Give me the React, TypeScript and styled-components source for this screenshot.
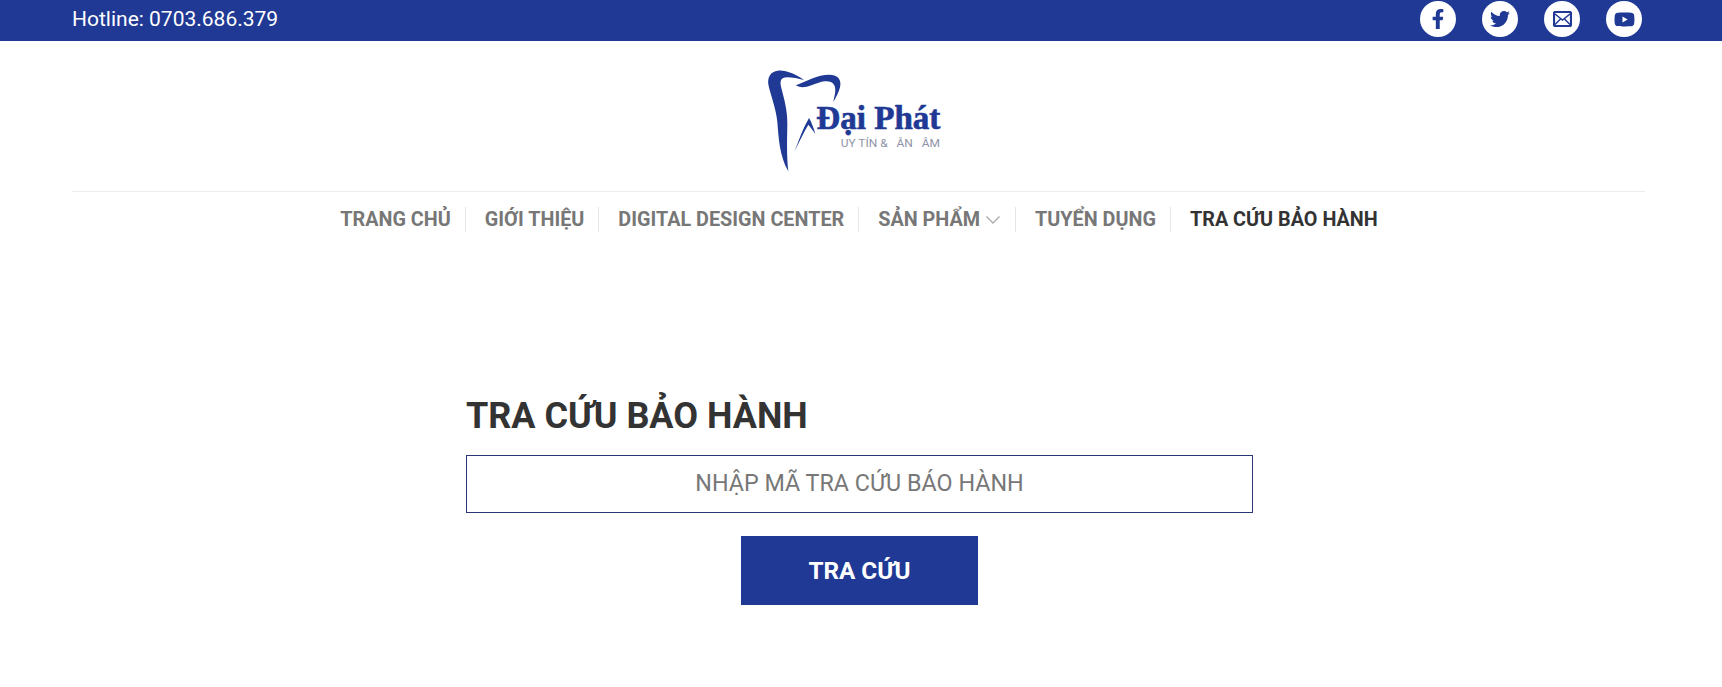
import React from "react";
import styled, { createGlobalStyle } from "styled-components";
import { FaFacebookF, FaTwitter, FaYoutube } from "react-icons/fa";

const BLUE = "#1f3995";

const GlobalStyle = createGlobalStyle`
  html, body {
    margin: 0;
    padding: 0;
    background: #fff;
    font-family: Roboto, "Liberation Sans", sans-serif;
  }
  * {
    box-sizing: border-box;
  }
`;

const TopBar = styled.div`
  height: 41px;
  padding: 1px 80px 0 72px;
  background: ${BLUE};
  display: flex;
  justify-content: space-between;
  align-items: flex-start;
`;

const Hotline = styled.div`
  color: #fff;
  font-size: 21px;
  line-height: 36px;
`;

const Socials = styled.div`
  display: flex;
  gap: 26px;
`;

const SocialLink = styled.a<{ $size?: number }>`
  width: 36px;
  height: 36px;
  border-radius: 50%;
  background: #fff;
  color: ${BLUE};
  font-size: ${(p) => p.$size ?? 20}px;
  display: flex;
  align-items: center;
  justify-content: center;
`;

const LogoRow = styled.div`
  margin: 0 77px 0 72px;
  padding: 9px 0 11px;
  border-bottom: 1px solid #ececec;
  display: flex;
  justify-content: center;
`;

const Nav = styled.nav`
  height: 55px;
  margin: 0 81px 0 72px;
  display: flex;
  justify-content: center;
  align-items: center;
`;

const NavItem = styled.a<{ $active?: boolean }>`
  height: 25px;
  padding: 0 14px 0 19px;
  border-left: 1px solid #e6e6e6;
  display: flex;
  align-items: center;
  gap: 5px;
  color: ${(p) => (p.$active ? "#333" : "#777")};
  font-size: 19.8px;
  font-weight: 700;
  white-space: nowrap;

  &:first-child {
    border-left: 0;
  }
`;

const Main = styled.main`
  width: 787px;
  margin: 147px 0 0 466px;
  display: flex;
  flex-direction: column;
`;

const Title = styled.h1`
  margin: 0 0 17px;
  color: #333;
  font-size: 36px;
  line-height: 44px;
  font-weight: 700;
`;

const CodeInput = styled.input`
  width: 100%;
  height: 58px;
  border: 1px solid #2a3678;
  border-radius: 0;
  outline: none;
  padding: 0 12px 2px;
  text-align: center;
  font-family: inherit;
  font-size: 23.3px;
  color: #333;

  &::placeholder {
    color: #777;
    opacity: 1;
  }
`;

const SubmitButton = styled.button`
  align-self: center;
  margin-top: 23px;
  width: 237px;
  height: 69px;
  border: 0;
  background: ${BLUE};
  color: #fff;
  font-family: inherit;
  font-size: 24.3px;
  font-weight: 700;
`;

const Logo = () => (
  <svg width="237" height="130" viewBox="0 0 711 390">
    <path
      fill={BLUE}
      d="M192 90C168 74 140 60 114 62C92 64 80 82 86 108C94 142 108 176 112 216C116 262 118 318 145 364C140 322 141 272 142 226C143 180 132 146 124 114C118 92 124 82 140 82C158 82 175 86 192 90Z"
    />
    <path
      fill={BLUE}
      d="M167 106C200 94 232 74 268 74C294 74 306 90 300 112C296 128 288 142 280 156C284 134 290 118 282 104C274 92 256 92 236 98C214 104 192 120 167 106Z"
    />
    <path fill={BLUE} d="M163 306C176 272 188 236 207 204C215 218 221 234 226 252C218 240 212 232 205 224C190 250 176 278 163 306Z" />
    <text
      x="229"
      y="236"
      fill={BLUE}
      stroke={BLUE}
      strokeWidth="2"
      fontFamily="'Liberation Serif', serif"
      fontWeight="700"
      fontSize="102"
      textLength="372"
      lengthAdjust="spacingAndGlyphs"
    >
      Đại Phát
    </text>
    <text
      x="302"
      y="291"
      fill="#8f93a8"
      fontFamily="Roboto, sans-serif"
      fontSize="30"
      textLength="298"
      lengthAdjust="spacingAndGlyphs"
      style={{ whiteSpace: "pre" }}
    >
      UY TÍN &amp;   ÂN   ÂM
    </text>
  </svg>
);

const MailIcon = () => (
  <svg width="19" height="16" viewBox="0 0 19 16">
    <rect x="1" y="1" width="17" height="14" rx="1.5" fill="none" stroke="currentColor" strokeWidth="2.2" />
    <path d="M2 3l7.5 6L17 3M2 13.5l5.5-5.5M17 13.5L11.5 8" fill="none" stroke="currentColor" strokeWidth="1.5" />
  </svg>
);

const ChevronIcon = () => (
  <svg width="16" height="10" viewBox="0 0 16 10">
    <path d="M1.5 1.5L8 8l6.5-6.5" fill="none" stroke="#aaa" strokeWidth="1.3" />
  </svg>
);

export default function App() {
  return (
    <>
      <GlobalStyle />
      <TopBar>
        <Hotline>Hotline: 0703.686.379</Hotline>
        <Socials>
          <SocialLink $size={20}><FaFacebookF /></SocialLink>
          <SocialLink $size={20}><FaTwitter /></SocialLink>
          <SocialLink><MailIcon /></SocialLink>
          <SocialLink $size={21}><FaYoutube /></SocialLink>
        </Socials>
      </TopBar>
      <LogoRow>
        <Logo />
      </LogoRow>
      <Nav>
        <NavItem>TRANG CHỦ</NavItem>
        <NavItem>GIỚI THIỆU</NavItem>
        <NavItem>DIGITAL DESIGN CENTER</NavItem>
        <NavItem>
          SẢN PHẨM
          <ChevronIcon />
        </NavItem>
        <NavItem>TUYỂN DỤNG</NavItem>
        <NavItem $active>TRA CỨU BẢO HÀNH</NavItem>
      </Nav>
      <Main>
        <Title>TRA CỨU BẢO HÀNH</Title>
        <CodeInput placeholder="NHẬP MÃ TRA CỨU BÁO HÀNH" />
        <SubmitButton>TRA CỨU</SubmitButton>
      </Main>
    </>
  );
}
